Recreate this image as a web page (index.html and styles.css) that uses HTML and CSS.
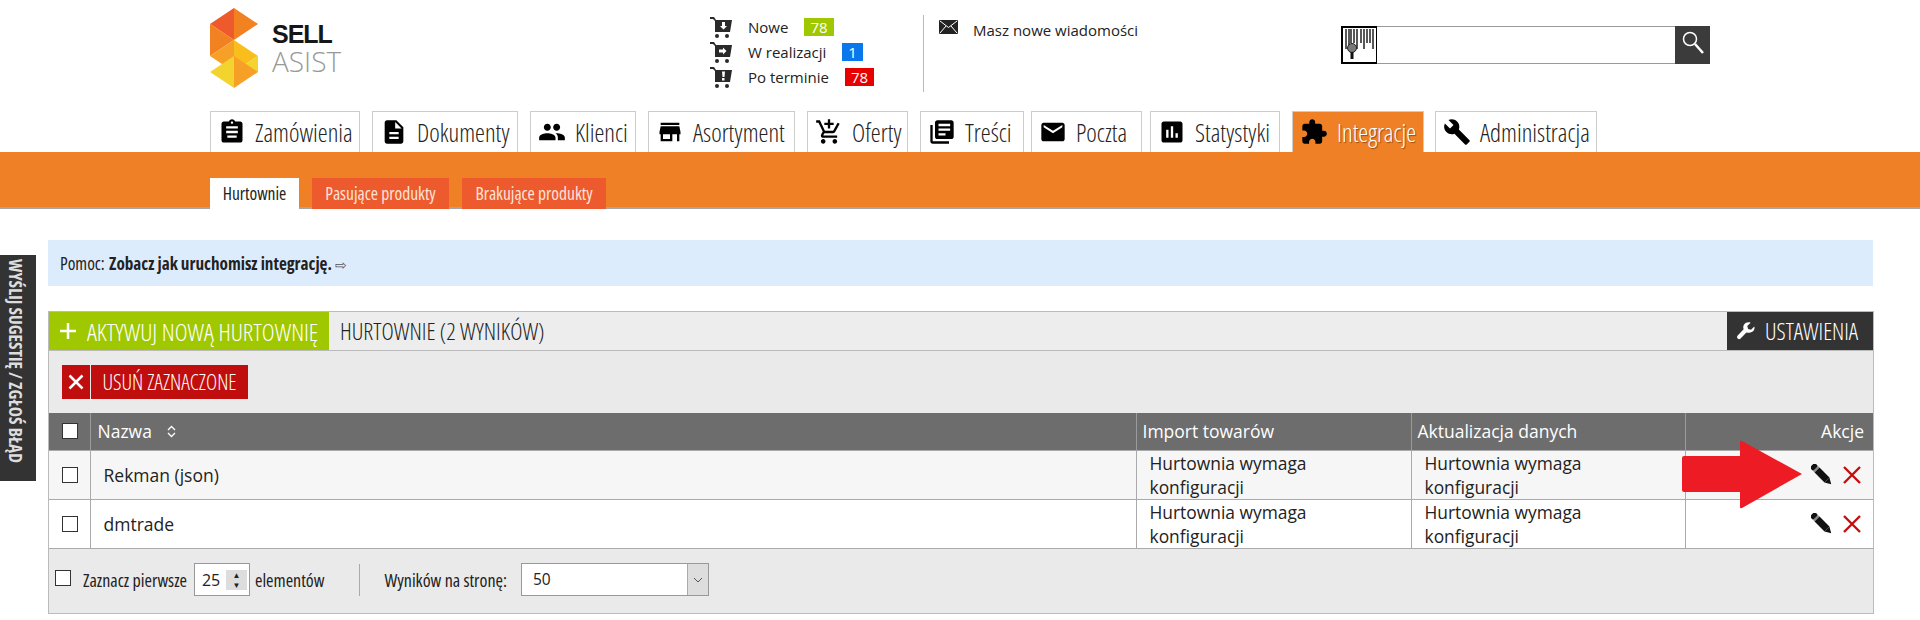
FILE: index.html
```html
<!DOCTYPE html>
<html lang="pl">
<head>
  <meta charset="UTF-8">
  <title>Hurtownie - Sell Asist</title>
  <link rel="stylesheet" href="styles.css">
</head>
<body>
  <header class="top">
    <a class="logo">
      <svg width="48" height="80" viewBox="0 0 48 80">
        <polygon points="24,0 0,16 24,32" fill="#ee5a2c"/>
        <polygon points="24,0 48,16 24,32" fill="#f28122"/>
        <polygon points="0,16 24,32 0,48" fill="#f28122"/>
        <polygon points="24,32 0,48 24,64" fill="#f7a028"/>
        <polygon points="24,32 48,48 24,64" fill="#f9be1b"/>
        <polygon points="48,48 48,64 24,64" fill="#f3d42e"/>
        <polygon points="0,64 24,48 24,80" fill="#f3d42e"/>
        <polygon points="24,48 48,64 24,80" fill="#f7a028"/>
      </svg>
      <span class="logo-text"><b>SELL</b><i>ASIST</i></span>
    </a>
    <div class="stats">
      <div class="stat">
        <svg class="cart" viewBox="0 0 22 22"><path d="M0 1h4l2 3h16l-2 12H5V5L3 3H0z" fill="#2a2a2a"/><circle cx="7" cy="20" r="2" fill="#2a2a2a"/><circle cx="17" cy="20" r="2" fill="#2a2a2a"/><path d="M12 6h3v4h2l-3.500 3.500L10 10h2z" fill="#fff"/></svg>
        <span>Nowe</span><em class="badge green">78</em>
      </div>
      <div class="stat">
        <svg class="cart" viewBox="0 0 22 22"><path d="M0 1h4l2 3h16l-2 12H5V5L3 3H0z" fill="#2a2a2a"/><circle cx="7" cy="20" r="2" fill="#2a2a2a"/><circle cx="17" cy="20" r="2" fill="#2a2a2a"/><path d="M9 8.500h4V6.500l3.500 3.500-3.500 3.500v-2H9z" fill="#fff"/></svg>
        <span>W realizacji</span><em class="badge blue">1</em>
      </div>
      <div class="stat">
        <svg class="cart" viewBox="0 0 22 22"><path d="M0 1h4l2 3h16l-2 12H5V5L3 3H0z" fill="#2a2a2a"/><circle cx="7" cy="20" r="2" fill="#2a2a2a"/><circle cx="17" cy="20" r="2" fill="#2a2a2a"/><path d="M12 5.500h3l-.5 5.500h-2zM12 12h2.500v2.500H12z" fill="#fff"/></svg>
        <span>Po terminie</span><em class="badge red">78</em>
      </div>
    </div>
    <div class="messages">
      <svg width="19" height="14" viewBox="0 0 19 14"><rect width="19" height="14" rx="1" fill="#222"/><path d="M1 1l8.500 6.500L18 1M1 13l6-7M18 13l-6-7" fill="none" stroke="#fff" stroke-width="1"/></svg>
      <span>Masz nowe wiadomości</span>
    </div>
    <div class="search">
      <span class="barcode">
        <svg width="33" height="35" viewBox="0 0 33 35">
          <path d="M3 1v20M6 1v20M8 1v14M11 1v14M14 1v20M18 1v14M21 1v20M24 1v14M27 1v14M30 1v20" stroke="#222" stroke-width="1.500"/>
          <circle cx="9" cy="20" r="4.500" fill="#777" stroke="#222"/>
          <path d="M9 24v7" stroke="#111" stroke-width="3"/>
        </svg>
      </span>
      <span class="search-field"></span>
      <span class="search-btn">
        <svg width="26" height="26" viewBox="0 0 26 26"><circle cx="10" cy="10" r="6.500" fill="none" stroke="#fff" stroke-width="1.500"/><path d="M15 15l8 9" stroke="#fff" stroke-width="2.500"/></svg>
      </span>
    </div>
  </header>

  <nav class="tabs">
    <a class="tab w-zam"><svg viewBox="0 0 24 24"><path d="M19 3h-4.180C14.400 1.840 13.300 1 12 1c-1.300 0-2.400.84-2.820 2H5c-1.100 0-2 .9-2 2v14c0 1.100.9 2 2 2h14c1.100 0 2-.9 2-2V5c0-1.100-.9-2-2-2zm-7 0c.55 0 1 .45 1 1s-.45 1-1 1-1-.45-1-1 .45-1 1-1zm4 14H8v-2h8v2zm1-4H7v-2h10v2zm0-4H7V7h10v2z"/></svg>Zamówienia</a>
    <a class="tab w-dok"><svg viewBox="0 0 24 24"><path d="M14 2H6c-1.100 0-1.990.9-1.990 2L4 20c0 1.100.89 2 1.990 2H18c1.100 0 2-.9 2-2V8l-6-6zm2 16H8v-2h8v2zm0-4H8v-2h8v2zm-3-5V3.500L18.500 9H13z"/></svg>Dokumenty</a>
    <a class="tab w-kli"><svg viewBox="0 0 24 24"><path d="M16 11c1.660 0 2.990-1.340 2.990-3S17.660 5 16 5c-1.660 0-3 1.340-3 3s1.340 3 3 3zm-8 0c1.660 0 2.990-1.340 2.990-3S9.660 5 8 5C6.340 5 5 6.340 5 8s1.340 3 3 3zm0 2c-2.330 0-7 1.170-7 3.500V19h14v-2.500c0-2.330-4.670-3.500-7-3.500zm8 0c-.29 0-.62.02-.97.05 1.160.84 1.970 1.970 1.970 3.450V19h6v-2.500c0-2.330-4.670-3.500-7-3.500z"/></svg>Klienci</a>
    <a class="tab w-aso"><svg viewBox="0 0 24 24"><path d="M20 4H4v2h16V4zm1 10v-2l-1-5H4l-1 5v2h1v6h10v-6h4v6h2v-6h1zm-9 4H6v-4h6v4z"/></svg>Asortyment</a>
    <a class="tab w-ofe"><svg viewBox="0 0 24 24"><path d="M11 9h2V6h3V4h-3V1h-2v3H8v2h3v3zm-4 9c-1.100 0-1.990.9-1.990 2S5.900 22 7 22s2-.9 2-2-.9-2-2-2zm10 0c-1.100 0-1.990.9-1.990 2s.89 2 1.990 2 2-.9 2-2-.9-2-2-2zm-9.830-3.250l.03-.12.9-1.630h7.450c.75 0 1.410-.41 1.750-1.030l3.860-7.010L19.420 4h-.01l-1.100 2-2.760 5H8.530l-.13-.27L6.160 6l-.95-2-.94-2H1v2h2l3.600 7.590-1.350 2.450c-.16.28-.25.61-.25.96 0 1.100.9 2 2 2h12v-2H7.420c-.13 0-.25-.11-.25-.25z"/></svg>Oferty</a>
    <a class="tab w-tre"><svg viewBox="0 0 24 24"><path d="M4 6H2v14c0 1.100.9 2 2 2h14v-2H4V6zm16-4H8c-1.100 0-2 .9-2 2v12c0 1.100.9 2 2 2h12c1.100 0 2-.9 2-2V4c0-1.100-.9-2-2-2zm-1 9H9V9h10v2zm-4 4H9v-2h6v2zm4-8H9V5h10v2z"/></svg>Treści</a>
    <a class="tab w-poc"><svg viewBox="0 0 24 24"><path d="M20 4H4c-1.100 0-1.990.9-1.990 2L2 18c0 1.100.9 2 2 2h16c1.100 0 2-.9 2-2V6c0-1.100-.9-2-2-2zm0 4l-8 5-8-5V6l8 5 8-5v2z"/></svg>Poczta</a>
    <a class="tab w-sta"><svg viewBox="0 0 24 24"><path d="M19 3H5c-1.100 0-2 .9-2 2v14c0 1.100.9 2 2 2h14c1.100 0 2-.9 2-2V5c0-1.100-.9-2-2-2zM9 17H7v-7h2v7zm4 0h-2V7h2v10zm4 0h-2v-4h2v4z"/></svg>Statystyki</a>
    <a class="tab w-int active"><svg viewBox="0 0 24 24"><path d="M20.500 11H19V7c0-1.100-.9-2-2-2h-4V3.500C13 2.120 11.880 1 10.500 1S8 2.120 8 3.500V5H4c-1.100 0-1.990.9-1.990 2v3.800H3.500c1.490 0 2.700 1.210 2.700 2.700s-1.210 2.700-2.700 2.700H2V20c0 1.100.9 2 2 2h3.800v-1.500c0-1.490 1.210-2.700 2.700-2.700 1.490 0 2.700 1.210 2.700 2.700V22H17c1.100 0 2-.9 2-2v-4h1.500c1.380 0 2.500-1.120 2.500-2.500S21.880 11 20.500 11z"/></svg>Integracje</a>
    <a class="tab w-adm"><svg viewBox="0 0 24 24"><path d="M22.700 19l-9.100-9.100c.9-2.300.4-5-1.500-6.900-2-2-5-2.400-7.400-1.300L9 6 6 9 1.600 4.700C.4 7.100.9 10.100 2.900 12.100c1.900 1.900 4.600 2.400 6.900 1.500l9.100 9.100c.4.4 1 .4 1.400 0l2.300-2.300c.5-.4.5-1.100.1-1.400z"/></svg>Administracja</a>
  </nav>

  <div class="subbar">
    <a class="sub current">Hurtownie</a>
    <a class="sub w-pas">Pasujące produkty</a>
    <a class="sub w-bra">Brakujące produkty</a>
  </div>

  <a class="feedback">WYŚLIJ SUGESTIĘ / ZGŁOŚ BŁĄD</a>

  <main class="content">
    <div class="help">Pomoc: <b>Zobacz jak uruchomisz integrację.</b> <span class="help-arrow">⇨</span></div>

    <section class="panel">
      <div class="panel-head">
        <a class="btn-add"><svg width="18" height="18" viewBox="0 0 18 18"><path d="M9 1v16M1 9h16" stroke="#fff" stroke-width="2.500"/></svg>AKTYWUJ NOWĄ HURTOWNIĘ</a>
        <span class="panel-title">HURTOWNIE (2 WYNIKÓW)</span>
        <a class="btn-settings"><svg width="20" height="20" viewBox="0 0 24 24"><path d="M22 6.500l-4 4-3.500-1-1-3.500 4-4c-3-1-6.500 0-8 2.500-1 1.800-1 3.800-.3 5.500L2 17.500c-1 1-1 2.500 0 3.500s2.500 1 3.500 0l7-7.300c1.800.7 3.800.6 5.500-.3C21 12.900 23 9.500 22 6.500z" fill="#fff"/></svg>USTAWIENIA</a>
      </div>

      <div class="toolbar">
        <a class="btn-del">
          <span class="btn-del-icon"><svg width="16" height="16" viewBox="0 0 16 16"><path d="M1.500 1.500l13 13M14.500 1.500l-13 13" stroke="#fff" stroke-width="2.500"/></svg></span>
          <span class="btn-del-text">USUŃ ZAZNACZONE</span>
        </a>
      </div>

      <table class="grid">
        <colgroup>
          <col class="c-check"><col class="c-name"><col class="c-import"><col class="c-update"><col class="c-actions">
        </colgroup>
        <thead>
          <tr>
            <th><input type="checkbox" class="check"></th>
            <th>Nazwa <svg class="sort" width="9" height="13" viewBox="0 0 9 13"><path d="M1 5l3.500-3.500L8 5M1 8l3.500 3.500L8 8" fill="none" stroke="#fff" stroke-width="1.300"/></svg></th>
            <th>Import towarów</th>
            <th>Aktualizacja danych</th>
            <th class="right">Akcje</th>
          </tr>
        </thead>
        <tbody>
          <tr class="odd">
            <td class="center"><input type="checkbox" class="check"></td>
            <td class="name">Rekman (json)</td>
            <td class="info"><div class="info-text">Hurtownia wymaga konfiguracji</div></td>
            <td class="info"><div class="info-text">Hurtownia wymaga konfiguracji</div></td>
            <td class="actions">
              <svg width="22" height="22" viewBox="0 0 22 22"><g transform="rotate(45 11 11)"><rect x="-3" y="7.500" width="5" height="7" rx="1.500" fill="#111"/><rect x="2" y="7.500" width="2" height="7" fill="#888"/><rect x="4" y="7.500" width="14" height="7" fill="#111"/><path d="M18 7.500l6 3.500-6 3.500z" fill="#111"/></g></svg>
              <svg width="18" height="18" viewBox="0 0 18 18"><path d="M1 1l16 16M17 1L1 17" stroke="#c40d0d" stroke-width="2.400"/></svg>
            </td>
          </tr>
          <tr>
            <td class="center"><input type="checkbox" class="check"></td>
            <td class="name">dmtrade</td>
            <td class="info"><div class="info-text">Hurtownia wymaga konfiguracji</div></td>
            <td class="info"><div class="info-text">Hurtownia wymaga konfiguracji</div></td>
            <td class="actions">
              <svg width="22" height="22" viewBox="0 0 22 22"><g transform="rotate(45 11 11)"><rect x="-3" y="7.500" width="5" height="7" rx="1.500" fill="#111"/><rect x="2" y="7.500" width="2" height="7" fill="#888"/><rect x="4" y="7.500" width="14" height="7" fill="#111"/><path d="M18 7.500l6 3.500-6 3.500z" fill="#111"/></g></svg>
              <svg width="18" height="18" viewBox="0 0 18 18"><path d="M1 1l16 16M17 1L1 17" stroke="#c40d0d" stroke-width="2.400"/></svg>
            </td>
          </tr>
        </tbody>
      </table>

      <div class="panel-foot">
        <input type="checkbox" class="check">
        <span class="foot-label">Zaznacz pierwsze</span>
        <span class="spin">25<span class="spin-btns"><i>▲</i><i>▼</i></span></span>
        <span class="foot-label">elementów</span>
        <span class="foot-sep"></span>
        <span class="foot-label">Wyników na stronę:</span>
        <span class="select"><span class="select-val">50</span><span class="select-arrow"><svg width="10" height="6" viewBox="0 0 10 6"><path d="M1 1l4 4 4-4" fill="none" stroke="#555"/></svg></span></span>
      </div>
    </section>
  </main>

  <svg class="pointer" width="122" height="70" viewBox="0 0 122 70"><path d="M2 16h56V2q0-2 2-1l60 33-60 34q-2 1-2-1V52H2q-2 0-2-2V18q0-2 2-2z" fill="#ed1c24"/></svg>
</body>
</html>
```

FILE: styles.css
```css
* {
  box-sizing: border-box;
}

body {
  margin: 0;
  height: 620px;
  overflow: hidden;
  position: relative;
  background-color: #fff;
  color: #222;
  font-family: "Open Sans", sans-serif;
  font-size: 15px;
}

/* the narrow headline face of the app */
.tab, .sub, .help, .panel-head, .btn-del, .feedback {
  font-stretch: 75%;
}

/* top strip */
.top {
  height: 111px;
  position: relative;
  display: flex;
  padding-left: 210px;
}

.logo {
  display: flex;
  align-items: flex-start;
  width: 500px;
  padding-top: 8px;
}

.logo-text {
  display: flex;
  flex-direction: column;
  margin: 13px 0 0 14px;
  font-family: "Liberation Sans", sans-serif;
  line-height: 27px;
}

.logo-text b {
  color: #161616;
  font-size: 25px;
  letter-spacing: -1px;
}

.logo-text i {
  color: #999;
  font-family: "Open Sans", sans-serif;
  font-weight: 300;
  font-style: normal;
  font-size: 28px;
  line-height: 25px;
  margin-top: 1px;
}

.stats {
  width: 213px;
  padding-top: 14px;
}

.stat {
  display: flex;
  align-items: center;
  height: 25px;
}

.cart {
  width: 22px;
  height: 22px;
  margin-right: 16px;
}

.badge {
  margin-left: 16px;
  padding: 0 6px;
  height: 18px;
  line-height: 18px;
  color: #fff;
  font-style: normal;
  font-size: 15px;
}

.green { background-color: #9fc800; }
.blue { background-color: #0a78ec; }
.red { background-color: #e60000; }

.messages {
  width: 418px;
  height: 77px;
  margin-top: 15px;
  padding: 5px 0 0 15px;
  border-left: 1px solid #bbb;
  display: flex;
  align-items: flex-start;
  gap: 15px;
}

.search {
  width: 369px;
  height: 38px;
  margin-top: 26px;
  display: flex;
}

.barcode {
  width: 36px;
  border: 2px solid #000;
  border-right-width: 1px;
  display: flex;
  overflow: hidden;
}

.search-field {
  flex: 1;
  border-top: 1px solid #999;
  border-bottom: 1px solid #999;
}

.search-btn {
  width: 35px;
  background-color: #3b3b3b;
  padding: 3px 0 0 5px;
}

/* main tabs */
.tabs {
  height: 41px;
  display: flex;
  padding-left: 210px;
}

.tab {
  display: flex;
  align-items: center;
  gap: 9px;
  padding-left: 7px;
  border: 1px solid #ccc;
  border-bottom: 0;
  font-size: 25px;
  font-weight: 300;
  color: #222;
  white-space: nowrap;
}

.tab svg {
  width: 28px;
  height: 28px;
  flex: none;
}

.w-zam { width: 150px; margin-right: 12px; }
.w-dok { width: 146px; margin-right: 12px; }
.w-kli { width: 106px; margin-right: 12px; }
.w-aso { width: 147px; margin-right: 12px; }
.w-ofe { width: 101px; margin-right: 12px; }
.w-tre { width: 104px; margin-right: 7px; }
.w-poc { width: 111px; margin-right: 8px; }
.w-sta { width: 130px; margin-right: 12px; }
.w-int { width: 132px; margin-right: 11px; }
.w-adm { width: 162px; }

.tab.active {
  background-color: #f08025;
  color: #fff;
  text-shadow: 1px 1px 1px rgba(0, 0, 0, 0.4);
}

/* orange strip */
.subbar {
  height: 57px;
  background-color: #f08025;
  border-bottom: 2px solid #a5a5a5;
  padding: 26px 0 0 210px;
  display: flex;
  gap: 13px;
}

.sub {
  height: 31px;
  line-height: 31px;
  background-color: #ec5a2e;
  color: #fde3d8;
  font-size: 17.5px;
  text-align: center;
}

.sub.current {
  width: 89px;
  background-color: #fff;
  color: #222;
}

.sub.w-pas { width: 137px; }
.sub.w-bra { width: 144px; }

.feedback {
  position: absolute;
  left: 0;
  top: 255px;
  width: 36px;
  height: 226px;
  padding-top: 4px;
  background-color: #333;
  color: #ddd;
  font-size: 17.3px;
  font-weight: bold;
  writing-mode: vertical-rl;
  line-height: 42px;
  white-space: nowrap;
}

/* content */
.content {
  padding: 31px 46px 0 48px;
}

.help {
  height: 46px;
  line-height: 46px;
  margin-right: 1px;
  padding-left: 12px;
  background-color: #ddecfd;
  font-size: 17.5px;
}

.help b {
  font-size: 17.2px;
  margin-left: 1px;
}

.help-arrow {
  color: #555;
  font-size: 14px;
}

.panel {
  margin-top: 25px;
  border: 1px solid #bbb;
  background-color: #eaeaea;
  height: 303px;
}

.panel-head {
  height: 39px;
  display: flex;
  align-items: stretch;
  background-color: #ededed;
  border-bottom: 1px solid #bbb;
  font-size: 23.3px;
  font-weight: 300;
}

.btn-add {
  width: 280px;
  background-color: #9fc800;
  color: #fff;
  display: flex;
  align-items: center;
  gap: 10px;
  padding-left: 10px;
  font-size: 24.4px;
  white-space: nowrap;
}

.panel-title {
  flex: 1;
  line-height: 38px;
  padding-left: 11px;
}

.btn-settings {
  width: 146px;
  background-color: #333;
  color: #fff;
  display: flex;
  align-items: center;
  gap: 9px;
  padding-left: 9px;
  font-size: 23px;
  white-space: nowrap;
}

.toolbar {
  height: 62px;
  padding: 14px 0 0 13px;
}

.btn-del {
  display: flex;
  width: 186px;
  height: 34px;
  color: #fff;
  font-size: 21.2px;
  font-weight: 300;
  gap: 1px;
  white-space: nowrap;
}

.btn-del-icon {
  width: 28px;
  background-color: #c00d0d;
  display: flex;
  align-items: center;
  justify-content: center;
}

.btn-del-text {
  flex: 1;
  background-color: #c00d0d;
  line-height: 34px;
  text-align: center;
}

.grid {
  width: 100%;
  table-layout: fixed;
  border-collapse: collapse;
}

.c-check { width: 41px; }
.c-name { width: 1046px; }
.c-import { width: 275px; }
.c-update { width: 274px; }

.grid th {
  height: 37px;
  background-color: #6d6d6d;
  color: #fff;
  font-weight: normal;
  font-size: 17.5px;
  text-align: left;
  padding: 0 6px;
  border-left: 1px solid #9a9a9a;
  border-bottom: 1px solid #aaa;
}

.grid th:nth-child(2) {
  padding-left: 7px;
}

.grid th:first-child {
  border-left: 0;
  padding: 0 0 0 13px;
}

.grid th.right {
  text-align: right;
  padding-right: 9px;
}

.sort {
  margin-left: 11px;
}

.grid td {
  height: 49px;
  background-color: #fff;
  border-left: 1px solid #aaa;
  border-bottom: 1px solid #aaa;
  padding: 0 13px;
  vertical-align: middle;
}

.grid tr.odd td {
  background-color: #f6f6f6;
}

.grid td:first-child {
  border-left: 0;
  padding: 0 0 0 13px;
}

.grid td.name {
  font-size: 17.5px;
}

.info-text {
  width: 170px;
  font-size: 17.4px;
  line-height: 24px;
}

.grid td.actions {
  padding: 0 12px 0 0;
  text-align: right;
}

.actions svg {
  vertical-align: middle;
  margin-left: 6px;
}

.check {
  appearance: none;
  width: 16px;
  height: 16px;
  margin: 0;
  display: block;
  background-color: #fff;
  border: 1px solid #333;
}

.panel-foot {
  display: flex;
  align-items: center;
  height: 62px;
  padding-left: 6px;
  font-size: 18px;
  font-stretch: 82%;
}

.panel-foot .check {
  margin-bottom: 3px;
}

.foot-label {
  margin-left: 13px;
}

.panel-foot .check + .foot-label {
  margin-left: 12px;
}

.spin {
  margin-left: 7px;
  width: 56px;
  height: 33px;
  background-color: #fff;
  border: 1px solid #999;
  display: flex;
  align-items: center;
  justify-content: space-between;
  padding: 0 2px 0 7px;
  font-size: 16px;
  font-stretch: 100%;
}

.spin + .foot-label {
  margin-left: 5px;
}

.spin-btns {
  display: flex;
  flex-direction: column;
  width: 21px;
  background-color: #ddd;
}

.spin-btns i {
  font-style: normal;
  font-size: 8px;
  line-height: 10px;
  text-align: center;
}

.foot-sep {
  width: 1px;
  height: 32px;
  background-color: #aaa;
  margin-left: 35px;
}

.foot-sep + .foot-label {
  margin-left: 24px;
}

.select {
  margin-left: 14px;
  width: 188px;
  height: 33px;
  background-color: #fff;
  border: 1px solid #999;
  display: flex;
}

.select-val {
  flex: 1;
  line-height: 31px;
  padding-left: 11px;
  font-size: 15.5px;
  font-stretch: 100%;
}

.select-arrow {
  width: 21px;
  background-color: #ddd;
  border-left: 1px solid #aaa;
  display: flex;
  align-items: center;
  justify-content: center;
}

.pointer {
  position: absolute;
  left: 1682px;
  top: 440px;
}
```
